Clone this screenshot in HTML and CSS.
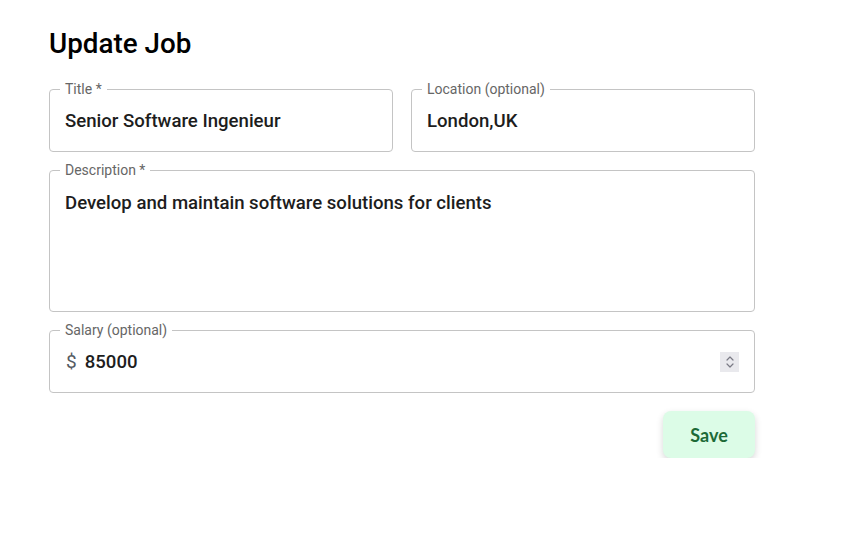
FILE: index.html
```html
<!DOCTYPE html>
<html lang="en">
<head>
<meta charset="utf-8">
<title>Update Job</title>
<link rel="stylesheet" href="styles.css">
</head>
<body>
<main class="page">
  <h1 class="heading">Update Job</h1>
  <form class="form">
    <div class="row">
      <fieldset class="field">
        <legend class="label">Title *</legend>
        <div class="value">Senior Software Ingenieur</div>
      </fieldset>
      <fieldset class="field">
        <legend class="label">Location (optional)</legend>
        <div class="value">London,UK</div>
      </fieldset>
    </div>
    <fieldset class="field field-multi">
      <legend class="label">Description *</legend>
      <div class="value">Develop and maintain software solutions for clients</div>
    </fieldset>
    <fieldset class="field">
      <legend class="label">Salary (optional)</legend>
      <div class="value value-salary">
        <span class="prefix">$</span>
        <span class="amount">85000</span>
        <span class="spinner">
          <svg width="12" height="16" viewBox="0 0 12 16" fill="none" stroke="#7a7a85" stroke-width="1.2" stroke-linecap="round" stroke-linejoin="round">
            <path d="M3 6 L6 3 L9 6"/>
            <path d="M3 10 L6 13 L9 10"/>
          </svg>
        </span>
      </div>
    </fieldset>
    <div class="actions">
      <button type="button" class="save">Save</button>
    </div>
  </form>
</main>
</body>
</html>
```
FILE: styles.css
```css
html, body {
  margin: 0;
  padding: 0;
  background: #ffffff;
}
body {
  font-family: Roboto, "Liberation Sans", sans-serif;
  color: #1d1d1d;
}
.page {
  width: 706px;
  padding: 26px 0 0 49px;
}
.heading {
  margin: 0 0 19px 0;
  font-size: 27.8px;
  line-height: 36px;
  font-weight: 500;
  color: #000;
  letter-spacing: 0;
}
.form {
  display: flex;
  flex-direction: column;
  gap: 10px;
}
.row {
  display: grid;
  grid-template-columns: 1fr 1fr;
  column-gap: 18px;
}
.field {
  margin: 0;
  padding: 0 16px;
  border: 1px solid #c4c4c4;
  border-radius: 4px;
  min-width: 0;
  height: 71px;
  box-sizing: border-box;
}
.label {
  margin-left: -6px;
  padding: 0 5px;
  font-size: 14px;
  line-height: 17px;
  color: #666666;
  font-weight: 400;
}
.value {
  font-size: 18.6px;
  line-height: 24px;
  font-weight: 500;
  padding-top: 11px;
  margin-left: -1px;
  color: #1d1d1d;
}
.field-multi {
  height: 150px;
}
.field-multi .value {
  padding-top: 12px;
}
.value-salary {
  display: flex;
  align-items: center;
  gap: 8px;
  padding-right: 0;
  margin-left: 0;
}
.prefix {
  color: #555b63;
  font-weight: 400;
  font-size: 19px;
}
.amount {
  flex: 1;
}
.spinner {
  width: 19px;
  height: 20px;
  background: #e9e9ed;
  display: flex;
  align-items: center;
  justify-content: center;
  margin-right: -1px;
}
.actions {
  display: flex;
  justify-content: flex-end;
  margin-top: 8px;
}
.save {
  width: 92px;
  height: 47px;
  border: none;
  border-radius: 8px;
  background: #dcfce7;
  color: #1c6a37;
  font-family: Lato, "Open Sans", sans-serif;
  font-weight: 700;
  font-size: 18px;
  box-shadow: 0 3px 7px rgba(0,0,0,0.16);
  cursor: pointer;
}
```
